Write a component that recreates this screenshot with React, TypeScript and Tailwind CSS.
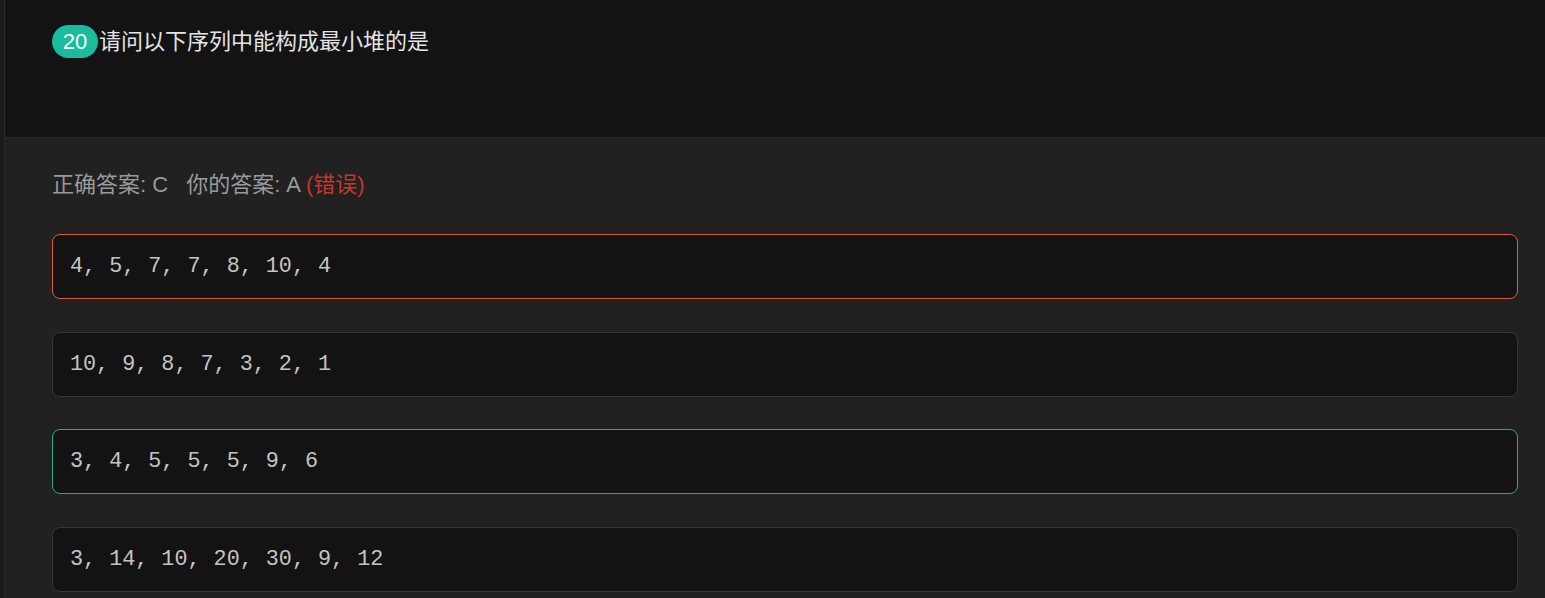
import React from 'react'

type Option = { text: string; state: 'wrong' | 'right' | 'none' }

const options: Option[] = [
  { text: '4, 5, 7, 7, 8, 10, 4', state: 'wrong' },
  { text: '10, 9, 8, 7, 3, 2, 1', state: 'none' },
  { text: '3, 4, 5, 5, 5, 9, 6', state: 'right' },
  { text: '3, 14, 10, 20, 30, 9, 12', state: 'none' },
]

function borderFor(state: Option['state']) {
  if (state === 'wrong') return 'border-[#e0583f]'
  if (state === 'right') return 'border-[#1fae8c]'
  return 'border-[#363636]'
}

export default function App() {
  return (
    <div
      className="flex h-[598px] w-full overflow-hidden bg-[#212121]"
      style={{ fontFamily: '"Liberation Sans", "Noto Sans CJK SC", sans-serif' }}
    >
      {/* left strip */}
      <div className="w-[5px] shrink-0 border-r border-[#2c2c2c] bg-[#1b1b1b]" />

      <div className="flex min-w-0 flex-1 flex-col">
        {/* Question header */}
        <div className="h-[138px] shrink-0 border-b border-[#2a2a2a] bg-[#131313] pl-[47px] pt-[25px]">
          <div className="flex items-center">
            <span className="flex h-[33px] w-[46px] items-center justify-center rounded-full bg-[#1abc9c] text-[22px] text-white">
              20
            </span>
            <span className="ml-[1px] text-[22px] font-normal text-[#e4e4e4]">
              请问以下序列中能构成最小堆的是
            </span>
          </div>
        </div>

        {/* Answer area */}
        <div className="flex flex-col pl-[47px] pr-[27px] pt-[32px]">
          <div className="text-[22px] leading-[30px] text-[#9a9a9a]">
            正确答案: C<span className="ml-[18px]">你的答案: A</span>{' '}
            <span className="text-[#c0392b]">(错误)</span>
          </div>

          <div className="mt-[34px] flex flex-col gap-[32.5px]">
            {options.map((o) => (
              <div
                key={o.text}
                className={`flex h-[65px] shrink-0 items-center rounded-lg border bg-[#131313] pl-[17px] pt-[2px] ${borderFor(o.state)}`}
              >
                <span
                  className="text-[21.75px] text-[#c4c4c4]"
                  style={{ fontFamily: '"Liberation Mono", "DejaVu Sans Mono", monospace' }}
                >
                  {o.text}
                </span>
              </div>
            ))}
          </div>
        </div>
      </div>
    </div>
  )
}
